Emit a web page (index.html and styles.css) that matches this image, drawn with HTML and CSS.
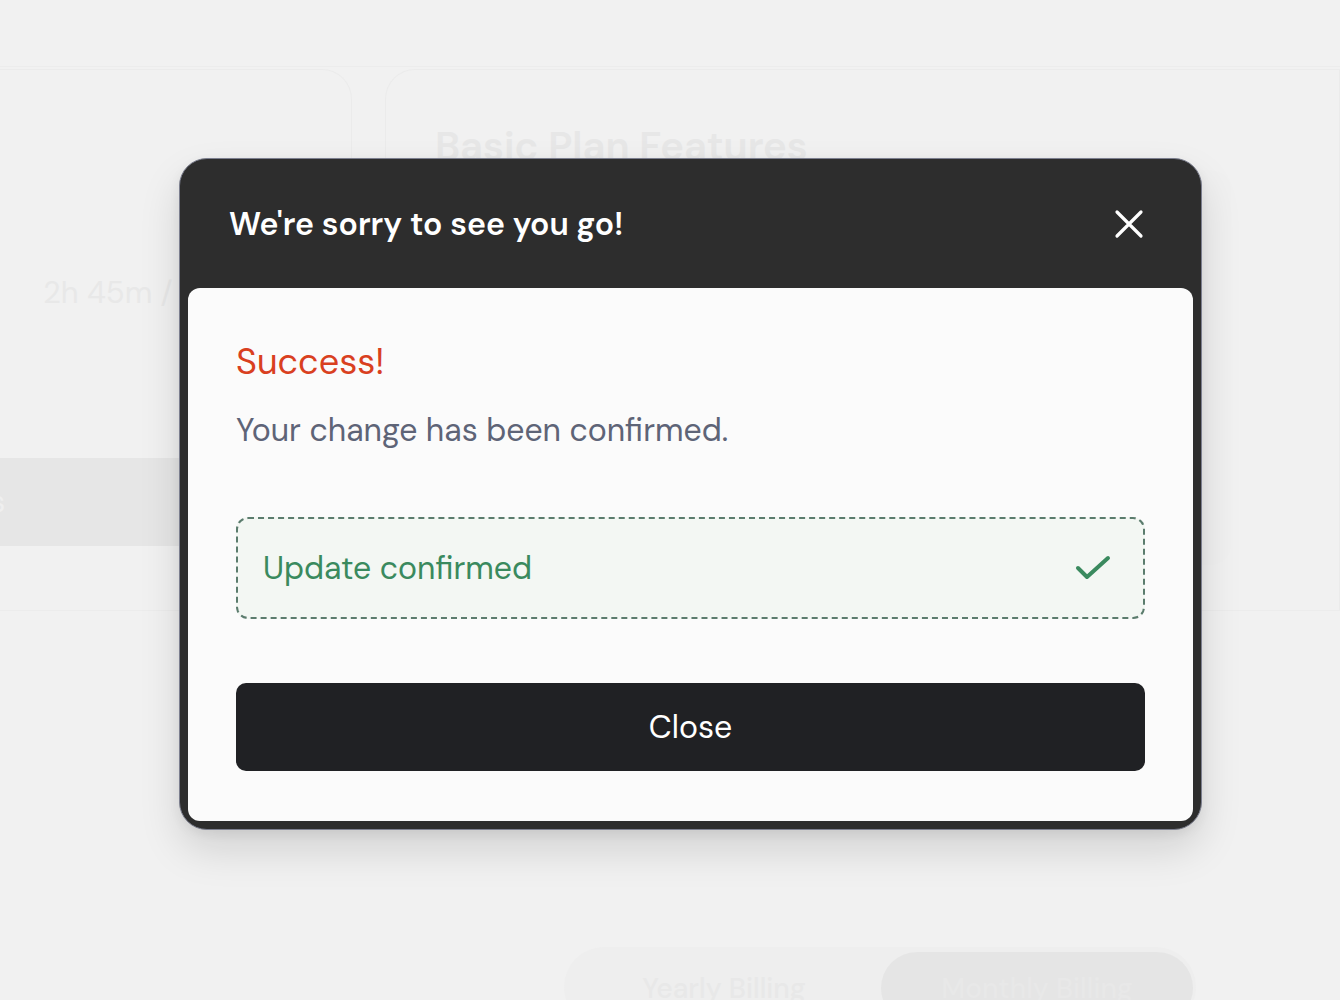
FILE: index.html
```html
<!DOCTYPE html>
<html lang="en">
<head>
<meta charset="utf-8">
<title>Cancel subscription</title>
<link rel="stylesheet" href="styles.css">
</head>
<body>
<div class="page">
  <div class="cards">
    <div class="card card-left">
      <div class="usage">2h 45m / 10h</div>
      <div class="bar"><span>Details</span></div>
    </div>
    <div class="card card-right">
      <h2 class="plan-title">Basic Plan Features</h2>
      <div class="plan-box"></div>
    </div>
  </div>
  <div class="toggle-row">
    <div class="toggle">
      <div class="opt">Yearly Billing</div>
      <div class="opt active">Monthly Billing</div>
    </div>
  </div>
</div>

<div class="modal">
  <div class="modal-head">
    <h1 class="modal-title">We're sorry to see you go!</h1>
    <button class="x-btn" aria-label="Close">
      <svg width="30" height="30" viewBox="0 0 30 30" fill="none" stroke="#ffffff" stroke-width="3.2" stroke-linecap="round"><path d="M3 3 L27 27 M27 3 L3 27"/></svg>
    </button>
  </div>
  <div class="modal-body">
    <div class="success">Success!</div>
    <p class="msg">Your change has been confirmed.</p>
    <div class="confirm-box">
      <span class="confirm-text">Update confirmed</span>
      <svg class="check" width="36" height="28" viewBox="0 0 36 28" fill="none" stroke="#3a8a5e" stroke-width="4" stroke-linecap="round" stroke-linejoin="round"><path d="M3 14 L12 23 L33 4"/></svg>
    </div>
    <button class="close-btn">Close</button>
  </div>
</div>
</body>
</html>
```

FILE: styles.css
```css
* { box-sizing: border-box; }
html, body { margin: 0; padding: 0; }
body {
  background: #f1f1f1;
  font-family: "DM Sans", Inter, "Liberation Sans", sans-serif;
  width: 1340px;
  height: 1000px;
  overflow: hidden;
  position: relative;
}

/* faded background page */
.page {
  padding-top: 66px;
}
.cards {
  border-top: 1px solid #ececec;
  display: flex;
  gap: 33px;
  height: 545px;
  padding-top: 2px;
  border-bottom: 1px solid #ececec;
}
.card {
  border: 1px solid #ebebeb;
  border-bottom: 0;
  background: #f1f1f1;
}
.card-left {
  flex: 0 0 382px;
  margin-left: -30px;
  border-radius: 0 30px 0 0;
  padding-top: 202px;
  overflow: hidden;
}
.usage {
  font-size: 31px;
  color: #e8e8e8;
  padding-left: 72px;
  height: 186px;
}
.bar {
  height: 88px;
  background: #e6e6e6;
  color: #efefef;
  font-size: 30px;
  line-height: 88px;
  display: flex;
}
.bar span {
  margin-left: -60px;
}
.card-right {
  flex: 1;
  border-radius: 30px 0 0 0;
  padding: 52px 0 0 49px;
}
.plan-title {
  margin: 0;
  font-size: 40px;
  font-weight: 600;
  color: #e7e7e7;
  line-height: 48px;
}
.plan-box {
  height: 395px;
  width: 706px;
  margin-left: 90px;
  border-radius: 20px;
  background: #f0f0f0;
}
.toggle-row {
  display: flex;
  justify-content: flex-end;
  padding: 336px 144px 0 0;
}
.toggle {
  display: flex;
  background: #eeeeee;
  border-radius: 40px;
  padding: 5px 3px 3px;
  width: 632px;
  height: 80px;
}
.opt {
  flex: 1;
  text-align: center;
  font-size: 28px;
  color: #e8e8e8;
  padding-top: 18px;
  font-weight: 500;
  white-space: nowrap;
}
.opt.active {
  background: #e5e5e5;
  border-radius: 40px;
  flex: 0 0 312px;
}

/* modal */
.modal {
  position: absolute;
  left: 179px;
  top: 158px;
  width: 1023px;
  height: 672px;
  background: #2d2d2d;
  border: 1.5px solid #7c7f8f;
  border-radius: 28px;
  padding: 0 8px 8px 8px;
  display: flex;
  flex-direction: column;
  box-shadow: 0 20px 40px rgba(0,0,0,0.13), 0 4px 12px rgba(0,0,0,0.06);
}
.modal-head {
  height: 129px;
  display: flex;
  align-items: center;
  justify-content: space-between;
  padding: 0 49px 0 41px;
}
.modal-title {
  margin: 0;
  color: #ffffff;
  font-size: 32px;
  font-weight: 600;
}
.x-btn {
  background: none;
  border: 0;
  padding: 0;
  width: 30px;
  height: 30px;
  display: flex;
}
.modal-body {
  flex: 1;
  background: #fbfbfb;
  border-radius: 12px;
  padding: 52px 48px 48px 48px;
}
.success {
  color: #d9401f;
  font-size: 36px;
  line-height: 44px;
}
.msg {
  margin: 26px 0 0;
  color: #5e6477;
  font-size: 32px;
  line-height: 40px;
}
.confirm-box {
  margin-top: 67px;
  height: 102px;
  border: 2.5px dashed #5b7c6d;
  border-radius: 12px;
  background: #f3f7f3;
  display: flex;
  align-items: center;
  justify-content: space-between;
  padding: 0 32px 0 25px;
}
.confirm-text {
  color: #3a8a5e;
  font-size: 32px;
}
.close-btn {
  margin-top: 64px;
  width: 100%;
  height: 88px;
  background: #202124;
  color: #ffffff;
  border: 0;
  border-radius: 10px;
  font-family: inherit;
  font-size: 32px;
}
```
